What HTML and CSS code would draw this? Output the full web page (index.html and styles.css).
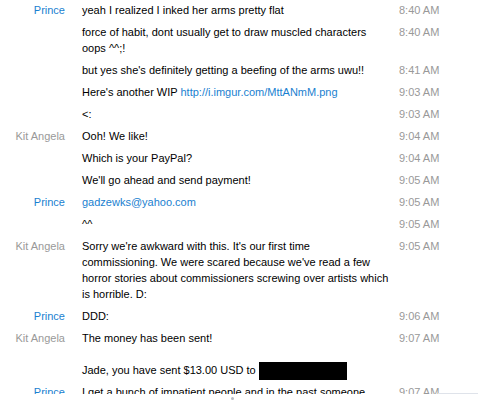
FILE: index.html
```html
<!DOCTYPE html>
<html>
<head>
<meta charset="utf-8">
<link rel="stylesheet" href="styles.css">
</head>
<body>
<div class="chat">
  <div class="row"><div class="name me">Prince</div><div class="msg">yeah I realized I inked her arms pretty flat</div><div class="time">8:40 AM</div></div>
  <div class="row"><div class="name"></div><div class="msg">force of habit, dont usually get to draw muscled characters oops ^^;!</div><div class="time">8:40 AM</div></div>
  <div class="row"><div class="name"></div><div class="msg">but yes she's definitely getting a beefing of the arms uwu!!</div><div class="time">8:41 AM</div></div>
  <div class="row"><div class="name"></div><div class="msg">Here's another WIP <a class="link" href="#">http://i.imgur.com/MttANmM.png</a></div><div class="time">9:03 AM</div></div>
  <div class="row"><div class="name"></div><div class="msg">&lt;:</div><div class="time">9:03 AM</div></div>
  <div class="row"><div class="name them">Kit Angela</div><div class="msg">Ooh! We like!</div><div class="time">9:04 AM</div></div>
  <div class="row"><div class="name"></div><div class="msg">Which is your PayPal?</div><div class="time">9:04 AM</div></div>
  <div class="row"><div class="name"></div><div class="msg">We'll go ahead and send payment!</div><div class="time">9:05 AM</div></div>
  <div class="row"><div class="name me">Prince</div><div class="msg"><a class="link" href="#">gadzewks@yahoo.com</a></div><div class="time">9:05 AM</div></div>
  <div class="row"><div class="name"></div><div class="msg">^^</div><div class="time">9:05 AM</div></div>
  <div class="row"><div class="name them">Kit Angela</div><div class="msg">Sorry we're awkward with this. It's our first time<br>commissioning. We were scared because we've read a few<br>horror stories about commissioners screwing over artists which<br>is horrible. D:</div><div class="time">9:05 AM</div></div>
  <div class="row"><div class="name me">Prince</div><div class="msg">DDD:</div><div class="time">9:06 AM</div></div>
  <div class="row"><div class="name them">Kit Angela</div><div class="msg">The money has been sent!</div><div class="time">9:07 AM</div></div>
  <div class="row system"><div class="name"></div><div class="msg">Jade, you have sent $13.00 USD to <span class="redact"></span></div><div class="time"></div></div>
  <div class="row"><div class="name me">Prince</div><div class="msg">I get a bunch of impatient people and in the past someone</div><div class="time">9:07 AM</div></div>
</div>
<div class="footer"><span class="dot"></span><span class="fill"></span><span class="edge"></span></div>
</body>
</html>
```
FILE: styles.css
```css
html, body {
  margin: 0;
  padding: 0;
  background: #fff;
}
body {
  width: 478px;
  height: 403px;
  overflow: hidden;
  font-family: "Liberation Sans", Arial, sans-serif;
  font-size: 11px;
  color: #000;
}
.chat {
  height: 394px;
  overflow: hidden;
}
.row {
  display: flex;
  align-items: flex-start;
  padding: 3px 0;
  line-height: 16px;
}
.row:first-child {
  margin-top: -1px;
}
.row.system {
  padding-top: 13px;
}
.name {
  flex: none;
  width: 65px;
  text-align: right;
  white-space: nowrap;
}
.msg {
  flex: none;
  width: 308px;
  margin-left: 17px;
}
.time {
  flex: none;
  margin-left: 9px;
  color: #999;
  white-space: nowrap;
}
.name.me { color: #1a7fd0; }
.name.them { color: #999; }
.link {
  color: #1a7fd0;
  text-decoration: none;
}
.redact {
  display: inline-block;
  width: 88px;
  height: 18px;
  margin-bottom: -2px;
  vertical-align: top;
  background: #000;
}
.footer {
  display: flex;
  align-items: flex-start;
  height: 9px;
}
.dot {
  width: 3px;
  height: 3px;
  border-radius: 50%;
  background: #b8bcc4;
  margin-left: 231px;
  margin-top: 3px;
}
.fill { flex: 1; }
.edge {
  width: 40px;
  height: 0;
  border-top: 1px solid #dfe3ea;
  margin-top: -1px;
}
```
